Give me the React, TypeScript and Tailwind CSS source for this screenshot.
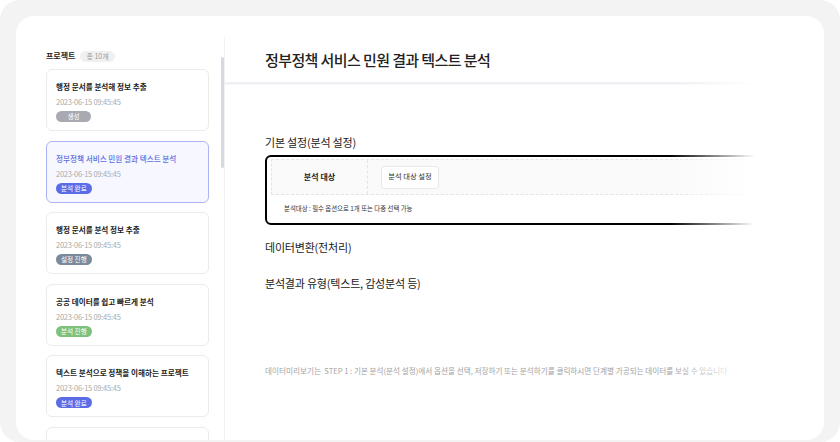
import React from 'react';

interface Project {
  id: number;
  title: string;
  date: string;
  status: string;
  tone: 'gray' | 'blue' | 'slate' | 'green';
}

const projects: Project[] = [
  { id: 1, title: '행정 문서를 분석해 정보 추출', date: '2023-06-15 09:45:45', status: '생성', tone: 'gray' },
  { id: 2, title: '정부정책 서비스 민원 결과 텍스트 분석', date: '2023-06-15 09:45:45', status: '분석 완료', tone: 'blue' },
  { id: 3, title: '행정 문서를 분석 정보 추출', date: '2023-06-15 09:45:45', status: '설정 진행', tone: 'slate' },
  { id: 4, title: '공공 데이터를 쉽고 빠르게 분석', date: '2023-06-15 09:45:45', status: '분석 진행', tone: 'green' },
  { id: 5, title: '텍스트 분석으로 정책을 이해하는 프로젝트', date: '2023-06-15 09:45:45', status: '분석 완료', tone: 'blue' },
  { id: 6, title: '행정 문서를 분석해 정보 추출', date: '2023-06-15 09:45:45', status: '생성', tone: 'gray' },
];

const toneClass: Record<Project['tone'], string> = {
  gray: 'bg-[#a9a9b1]',
  blue: 'bg-[#5a6ce6]',
  slate: 'bg-[#7a8a9b]',
  green: 'bg-[#7cc27c]',
};

function ProjectCard({ project, selected }: { project: Project; selected: boolean }) {
  return (
    <div
      className={`h-[62px] shrink-0 rounded-[6px] border px-[9px] pt-[12px] ${
        selected ? 'border-[#a9b4f6] bg-[#f7f8ff]' : 'border-[#ebebeb] bg-white'
      }`}
    >
      <div
        className={`text-[7.6px] leading-[10px] whitespace-nowrap ${
          selected ? 'text-[#5b6be0] font-medium' : 'text-[#222] font-bold'
        }`}
      >
        {project.title}
      </div>
      <div className="mt-[5px] text-[7.5px] leading-[10px] tracking-[-0.25px] text-[#aaa]">{project.date}</div>
      <div className="mt-[4px] flex">
        <span
          className={`flex h-[11px] min-w-[35px] items-center justify-center rounded-full px-[5px] text-[6.6px] leading-none text-white ${toneClass[project.tone]}`}
        >
          {project.status}
        </span>
      </div>
    </div>
  );
}

export default function App() {
  return (
    <div className="w-[840px] h-[442px] bg-white font-['Noto_Sans_CJK_KR','Noto_Sans',sans-serif]">
      <div className="h-full rounded-[20px] bg-[#f3f3f3] px-[16px] pt-[16px] pb-[2px]">
        <div className="flex h-full overflow-hidden rounded-[18px] bg-white">
          {/* Sidebar */}
          <div className="flex w-[208px] shrink-0">
            <div className="w-[193px] shrink-0 pl-[30px] pt-[34px]">
              <div className="flex h-[12px] items-center gap-[5px]">
                <span className="text-[8px] font-bold leading-none text-[#222]">프로젝트</span>
                <span className="flex h-[11px] items-center rounded-full bg-[#f0f0f0] px-[6px] text-[7px] leading-none text-[#9a9a9a]">
                  총 10개
                </span>
              </div>
              <div className="mt-[7px] flex flex-col gap-[9.6px]">
                {projects.map((p) => (
                  <ProjectCard key={p.id} project={p} selected={p.id === 2} />
                ))}
              </div>
            </div>
            <div className="ml-[12px] w-[3px] shrink-0">
              <div className="mt-[41px] h-[111px] rounded-full bg-[#d6d9df]" />
            </div>
          </div>
          <div className="mt-[21px] w-px shrink-0 bg-[#f0f0f0]" />

          {/* Main */}
          <div className="relative flex-1">
            <div className="pt-[36px] pb-[14px] pl-[40px]">
              <h1 className="text-[15px] font-medium leading-[16px] tracking-[-0.6px] text-[#222]">
                정부정책 서비스 민원 결과 텍스트 분석
              </h1>
            </div>
            <div className="h-[3px] bg-gradient-to-b from-[#ebebf1] to-[#f8f8fb]" />

            <div className="px-[40px]">
              <h2 className="mt-[50px] text-[11px] leading-[14px] tracking-[-0.2px] text-[#222]">기본 설정(분석 설정)</h2>
              <div className="mt-[6px] rounded-[6px] border-2 border-black px-[4px] pt-[2px] pb-[9px]">
                <div className="flex h-[36px] items-center border border-dashed border-[#e4e4e4] bg-[#fafafa]">
                  <div className="flex h-full w-[96px] shrink-0 items-center justify-center border-r border-dashed border-[#e4e4e4] text-[8px] font-bold text-[#222]">
                    분석 대상
                  </div>
                  <button className="ml-[13px] flex h-[23px] w-[58px] items-center justify-center rounded-[3px] border border-[#e8e8e8] bg-white text-[7.3px] leading-none text-[#333]">
                    분석 대상 설정
                  </button>
                </div>
                <div className="mt-[9px] pl-[13px] text-[6.4px] leading-[10px] text-[#333]">
                  분석대상 : 필수 옵션으로 1개 또는 다중 선택 가능
                </div>
              </div>

              <h2 className="mt-[15px] text-[11px] leading-[14px] tracking-[-0.2px] text-[#222]">데이터변환(전처리)</h2>
              <h2 className="mt-[22px] text-[11px] leading-[14px] tracking-[-0.2px] text-[#222]">
                분석결과 유형(텍스트, 감성분석 등)
              </h2>

              <p className="mt-[76px] whitespace-nowrap text-[7.6px] leading-[10px] text-[#a3a3a3]">
                데이터미리보기는&nbsp; STEP 1 : 기본 분석(분석 설정)에서 옵션을 선택, 저장하기 또는 분석하기를 클릭하시면 단계별 가공되는 데이터를 보실 수 있습니다
              </p>
            </div>

            {/* right fade */}
            <div className="pointer-events-none absolute top-0 right-0 bottom-0 w-[154px] bg-[linear-gradient(to_right,rgba(255,255,255,0),#fff_55%)]" />
          </div>
        </div>
      </div>
    </div>
  );
}
